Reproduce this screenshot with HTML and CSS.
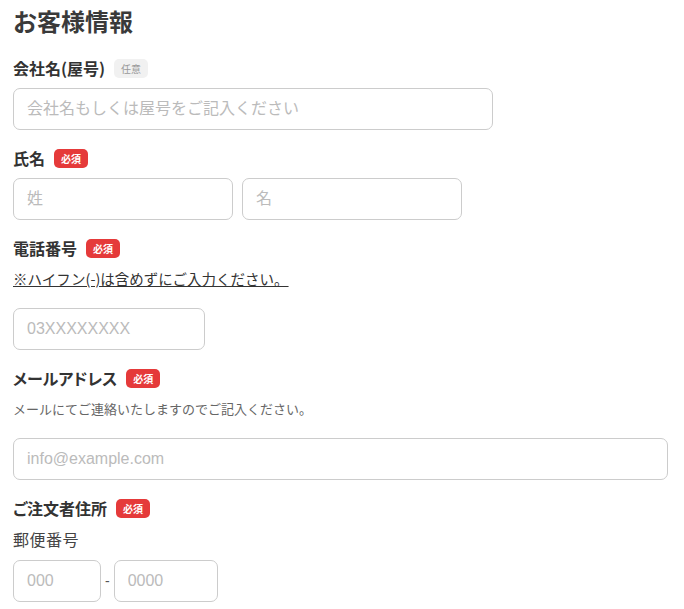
FILE: index.html
```html
<!DOCTYPE html>
<html lang="ja">
<head>
    <meta charset="UTF-8">
    <meta name="viewport" content="width=device-width, initial-scale=1.0">
    <title>お客様情報</title>
    <link rel="stylesheet" href="styles.css">
</head>
<body>
    <div class="container">
        <h1>お客様情報</h1>
        <form id="customer-form">
            <div class="field">
                <div class="field-label">
                    <span>会社名(屋号)</span>
                    <span class="badge badge-optional">任意</span>
                </div>
                <input type="text" class="input input-company" placeholder="会社名もしくは屋号をご記入ください">
            </div>

            <div class="field">
                <div class="field-label">
                    <span>氏名</span>
                    <span class="badge badge-required">必須</span>
                </div>
                <div class="row">
                    <input type="text" class="input input-name" placeholder="姓">
                    <input type="text" class="input input-name" placeholder="名">
                </div>
            </div>

            <div class="field">
                <div class="field-label">
                    <span>電話番号</span>
                    <span class="badge badge-required">必須</span>
                </div>
                <p class="note">※ハイフン(-)は含めずにご入力ください。</p>
                <input type="tel" class="input input-tel" placeholder="03XXXXXXXX">
            </div>

            <div class="field">
                <div class="field-label">
                    <span>メールアドレス</span>
                    <span class="badge badge-required">必須</span>
                </div>
                <p class="desc">メールにてご連絡いたしますのでご記入ください。</p>
                <input type="email" class="input input-email" placeholder="info@example.com">
            </div>

            <div class="field">
                <div class="field-label">
                    <span>ご注文者住所</span>
                    <span class="badge badge-required">必須</span>
                </div>
                <p class="sub-label">郵便番号</p>
                <div class="row row-zip">
                    <input type="text" class="input input-zip1" placeholder="000">
                    <span class="dash">-</span>
                    <input type="text" class="input input-zip2" placeholder="0000">
                </div>
            </div>
        </form>
    </div>
</body>
</html>
```

FILE: styles.css
```css
body {
    margin: 0;
    background-color: #fff;
    color: #333;
    font-family: "Liberation Sans", "Noto Sans CJK JP", sans-serif;
}

.container {
    padding: 9px 16px 0 13px;
}

h1 {
    margin: 0 0 25px;
    font-size: 24px;
    line-height: 24px;
    font-weight: bold;
    color: #3a3a3a;
    font-family: "Noto Sans CJK JP", sans-serif;
}

.field {
    margin-bottom: 18px;
}

.field-label {
    display: flex;
    align-items: center;
    gap: 9px;
    height: 20px;
    margin-bottom: 10px;
    font-family: "Noto Sans CJK JP", sans-serif;
    font-feature-settings: "palt";
    font-size: 16px;
    font-weight: bold;
    color: #333;
}

.badge {
    display: inline-flex;
    align-items: center;
    justify-content: center;
    height: 19px;
    padding: 0 7px;
    border-radius: 5px;
    font-size: 10px;
    font-weight: bold;
}

.badge-required {
    background-color: #e53a3a;
    color: #fff;
}

.badge-optional {
    background-color: #f1f1f1;
    color: #999;
    font-weight: normal;
}

.note {
    margin: 0 0 18px;
    line-height: 22px;
    font-family: "Noto Sans CJK JP", sans-serif;
    font-size: 14.5px;
    color: #333;
    text-decoration: underline;
}

.desc {
    margin: 0 0 18px;
    line-height: 22px;
    font-family: "Noto Sans CJK JP", sans-serif;
    font-size: 13px;
    color: #666;
}

.sub-label {
    margin: 0 0 10px;
    line-height: 22px;
    font-family: "Noto Sans CJK JP", sans-serif;
    font-size: 16px;
    letter-spacing: 0.5px;
    color: #444;
}

.input {
    display: block;
    box-sizing: border-box;
    height: 42px;
    padding: 0 13px;
    border: 1px solid #ccc;
    border-radius: 7px;
    background: #fff;
    font-family: "Liberation Sans", "Noto Sans CJK JP", sans-serif;
    font-size: 16px;
    color: #333;
}

.input::placeholder {
    color: #bbb;
}

.input-company {
    width: 480px;
}

.row {
    display: flex;
    align-items: center;
    gap: 9px;
}

.input-name {
    width: 220px;
}

.input-tel {
    width: 192px;
}

.input-email {
    width: 100%;
}

.row-zip {
    gap: 4px;
}

.input-zip1 {
    width: 88px;
}

.input-zip2 {
    width: 104px;
}

.dash {
    font-size: 14px;
    color: #555;
}
```
